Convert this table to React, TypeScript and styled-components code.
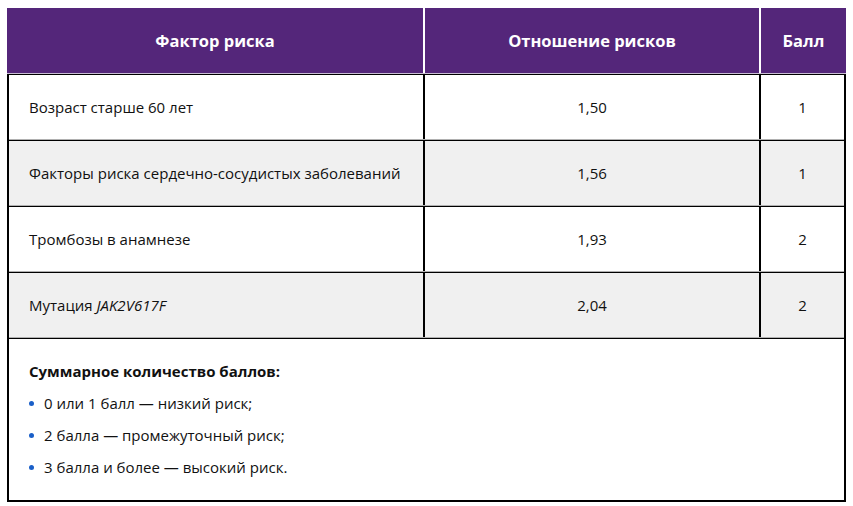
import React from 'react';
import styled, { createGlobalStyle } from 'styled-components';

const GlobalStyle = createGlobalStyle`
  body {
    margin: 0;
    background: #fff;
    font-family: "Open Sans", "Noto Sans", sans-serif;
    color: #111;
  }
`;

const cols = "418px 336px 85px";

const Page = styled.div`
  padding: 8px 7px;
`;

const Table = styled.div`
  width: 839px;
  border-left: 2px solid #000;
  border-right: 2px solid #000;
  border-bottom: 2px solid #000;
  box-sizing: border-box;
`;

const HeadRow = styled.div`
  display: grid;
  grid-template-columns: ${cols};
  height: 66px;
  margin: 0 -2px;
  background: #54267a;
  border-bottom: 1px solid #c9bdd4;
  box-sizing: border-box;
`;

const HeadCell = styled.div<{ $last?: boolean }>`
  display: flex;
  align-items: center;
  justify-content: center;
  color: #fff;
  font-weight: 700;
  font-size: 16.5px;
  border-right: ${p => (p.$last ? "none" : "2px solid #fff")};
`;

const Row = styled.div<{ $shade?: boolean }>`
  display: grid;
  grid-template-columns: 416px 336px 83px;
  height: 66px;
  box-sizing: border-box;
  background: ${p => (p.$shade ? "#f0f0f0" : "#fff")};
  border-top: 1px solid #000;
  border-bottom: 1px solid #b0b0b0;
`;

const Cell = styled.div<{ $center?: boolean; $last?: boolean }>`
  display: flex;
  align-items: center;
  justify-content: ${p => (p.$center ? "center" : "flex-start")};
  padding-left: ${p => (p.$center ? "0" : "20px")};
  font-size: 15px;
  border-right: ${p => (p.$last ? "none" : "2px solid #000")};
`;

const Footer = styled.div`
  border-top: 1px solid #000;
  padding: 22px 20px 18px;
  height: 162px;
  box-sizing: border-box;
  font-size: 15px;
`;

const Title = styled.div`
  font-weight: 700;
  line-height: 20px;
  margin-bottom: 12px;
`;

const List = styled.ul`
  list-style: none;
  margin: 0;
  padding: 0;
  display: flex;
  flex-direction: column;
  gap: 12px;
`;

const Item = styled.li`
  display: flex;
  align-items: center;
  line-height: 20px;
  &::before {
    content: "";
    width: 5px;
    height: 5px;
    border-radius: 50%;
    background: #1a5fc8;
    margin-right: 10px;
  }
`;

const rows = [
  { name: <>Возраст старше 60 лет</>, ratio: "1,50", score: "1" },
  { name: <>Факторы риска сердечно-сосудистых заболеваний</>, ratio: "1,56", score: "1" },
  { name: <>Тромбозы в анамнезе</>, ratio: "1,93", score: "2" },
  { name: <>Мутация <i>JAK2V617F</i></>, ratio: "2,04", score: "2" },
];

const App = () => (
  <Page>
    <GlobalStyle />
    <Table>
      <HeadRow>
        <HeadCell>Фактор риска</HeadCell>
        <HeadCell>Отношение рисков</HeadCell>
        <HeadCell $last>Балл</HeadCell>
      </HeadRow>
      {rows.map((r, i) => (
        <Row key={i} $shade={i % 2 === 1}>
          <Cell><span>{r.name}</span></Cell>
          <Cell $center>{r.ratio}</Cell>
          <Cell $center $last>{r.score}</Cell>
        </Row>
      ))}
      <Footer>
        <Title>Суммарное количество баллов:</Title>
        <List>
          <Item>0 или 1 балл — низкий риск;</Item>
          <Item>2 балла — промежуточный риск;</Item>
          <Item>3 балла и более — высокий риск.</Item>
        </List>
      </Footer>
    </Table>
  </Page>
);

export default App;
